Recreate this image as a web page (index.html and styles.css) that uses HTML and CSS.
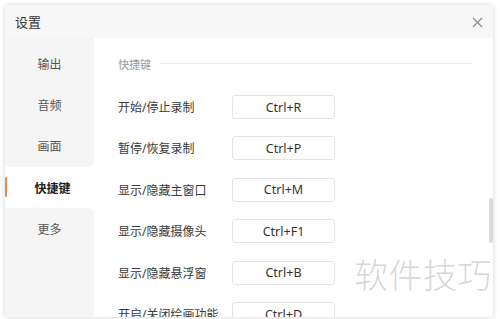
FILE: index.html
```html
<!DOCTYPE html>
<html lang="zh-CN">
<head>
    <meta charset="UTF-8">
    <title>设置</title>
    <link rel="stylesheet" href="styles.css">
</head>
<body>

<div class="window">
    <!-- Title bar -->
    <div class="titlebar">
        <span class="title">设置</span>
        <svg class="close" width="11" height="11" viewBox="0 0 11 11">
            <path d="M1 1 L10 10 M10 1 L1 10" stroke="#8a8a8a" stroke-width="1.1" fill="none"/>
        </svg>
    </div>

    <div class="main">
        <!-- Sidebar -->
        <div class="sidebar">
            <div class="nav-top"></div>
            <div class="nav-item">输出</div>
            <div class="nav-item">音频</div>
            <div class="nav-item before-active">画面</div>
            <div class="nav-item active">快捷键</div>
            <div class="nav-item after-active">更多</div>
            <div class="nav-fill"></div>
        </div>

        <!-- Content -->
        <div class="content">
            <div class="group-title">
                <span>快捷键</span>
                <div class="line"></div>
            </div>
            <div class="rows">
                <div class="row"><span class="label">开始/停止录制</span><div class="key">Ctrl+R</div></div>
                <div class="row"><span class="label">暂停/恢复录制</span><div class="key">Ctrl+P</div></div>
                <div class="row"><span class="label">显示/隐藏主窗口</span><div class="key">Ctrl+M</div></div>
                <div class="row"><span class="label">显示/隐藏摄像头</span><div class="key">Ctrl+F1</div></div>
                <div class="row"><span class="label">显示/隐藏悬浮窗</span><div class="key">Ctrl+B</div></div>
                <div class="row"><span class="label">开启/关闭绘画功能</span><div class="key">Ctrl+D</div></div>
            </div>
            <div class="scroll-thumb"></div>
        </div>
    </div>
</div>

<div class="watermark">软件技巧</div>

</body>
</html>
```

FILE: styles.css
```css
body {
    margin: 0;
    padding: 5px;
    width: 500px;
    height: 319px;
    box-sizing: border-box;
    background-color: #fff;
    font-family: "Noto Sans", "Noto Sans CJK SC", sans-serif;
    overflow: hidden;
    position: relative;
}
.window {
    width: 488px;
    height: 312px;
    border-radius: 3px;
    box-shadow: 0 0 5px rgba(0, 0, 0, 0.18);
    display: flex;
    flex-direction: column;
    overflow: hidden;
    background-color: #fff;
}
.titlebar {
    height: 33px;
    flex: none;
    background-color: #f7f7f7;
    display: flex;
    align-items: center;
    justify-content: space-between;
    padding: 0 10px 0 10px;
}
.title {
    font-size: 13px;
    color: #333;
}
.close {
    margin-top: 2px;
}
.main {
    flex: 1;
    display: flex;
    min-height: 0;
}
.sidebar {
    width: 89px;
    flex: none;
    display: flex;
    flex-direction: column;
    background-color: #fff;
}
.nav-top {
    height: 5px;
    flex: none;
    background-color: #f5f5f5;
}
.nav-item {
    height: 41.4px;
    flex: none;
    display: flex;
    align-items: center;
    justify-content: center;
    font-size: 12px;
    color: #555;
    background-color: #f5f5f5;
    position: relative;
}
.nav-item.before-active {
    border-bottom-right-radius: 6px;
}
.nav-item.after-active {
    border-top-right-radius: 6px;
}
.nav-item.active {
    height: 33px;
    margin: 4px 0 4px 6px;
    background-color: #fff;
    color: #222;
    font-weight: bold;
    border-radius: 4px 0 0 4px;
}
.nav-item.active::before {
    content: "";
    position: absolute;
    left: -6px;
    top: 6px;
    width: 2px;
    height: 20px;
    background-color: #f0894f;
    border-radius: 1px;
}
.nav-fill {
    flex: 1;
    background-color: #f5f5f5;
}
.content {
    flex: 1;
    padding: 5px 0 0 24px;
    position: relative;
    overflow: hidden;
}
.group-title {
    height: 41.4px;
    display: flex;
    align-items: center;
    gap: 8px;
    font-size: 11px;
    color: #999;
    padding-right: 20px;
}
.group-title .line {
    flex: 1;
    height: 1px;
    background-color: #eee;
}
.rows {
    padding-top: 2px;
}
.row {
    height: 41.4px;
    display: flex;
    align-items: center;
}
.label {
    width: 114px;
    font-size: 12px;
    color: #3a3a3a;
}
.key {
    width: 101px;
    height: 22px;
    border: 1px solid #e4e4e4;
    border-radius: 3px;
    display: flex;
    align-items: center;
    justify-content: center;
    font-size: 12.5px;
    color: #333;
}
.scroll-thumb {
    position: absolute;
    right: 0;
    top: 160px;
    width: 4px;
    height: 45px;
    background-color: #d9d9d9;
    border-radius: 2px;
}
.watermark {
    position: absolute;
    left: 354px;
    top: 249px;
    font-size: 34px;
    letter-spacing: 0.5px;
    color: rgba(0, 0, 0, 0.18);
    font-family: "Noto Sans CJK SC", sans-serif;
    font-weight: 300;
}
```
